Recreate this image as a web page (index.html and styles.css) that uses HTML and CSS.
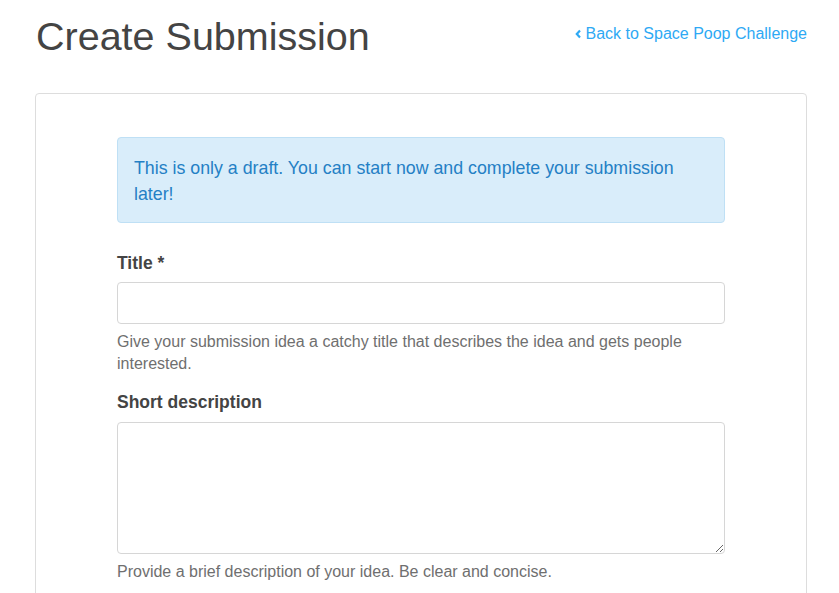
FILE: index.html
```html
<!DOCTYPE html>
<html lang="en">
<head>
    <meta charset="UTF-8">
    <meta name="viewport" content="width=device-width, initial-scale=1.0">
    <link rel="stylesheet" href="styles.css">
</head>
<body>
    <div class="page-head">
        <h1>Create Submission</h1>
        <a href="#" class="back-link">
            <svg width="6" height="10" viewBox="0 0 6 10"><polyline points="5,1.5 1.8,5 5,8.5" fill="none" stroke="currentColor" stroke-width="2.2"/></svg>
            Back to Space Poop Challenge
        </a>
    </div>

    <div class="panel">
        <div class="panel-body">
            <div class="alert">
                This is only a draft. You can start now and complete your submission later!
            </div>

            <form>
                <div class="form-group">
                    <label for="title">Title *</label>
                    <input type="text" id="title" name="title">
                    <p class="help">Give your submission idea a catchy title that describes the idea and gets people interested.</p>
                </div>
                <div class="form-group">
                    <label for="short">Short description</label>
                    <textarea id="short" name="short"></textarea>
                    <p class="help">Provide a brief description of your idea. Be clear and concise.</p>
                </div>
            </form>
        </div>
    </div>
</body>
</html>
```

FILE: styles.css
```css
body {
    margin: 0;
    font-family: "Liberation Sans", Arial, sans-serif;
    color: #444;
    background: #fff;
}

.page-head {
    display: flex;
    justify-content: space-between;
    align-items: flex-start;
    padding: 0 32px 0 36px;
}

h1 {
    margin: 14px 0 0 0;
    font-size: 39.5px;
    line-height: 44px;
    font-weight: normal;
    color: #444;
}

.back-link {
    display: flex;
    align-items: center;
    gap: 5px;
    margin-top: 24px;
    font-size: 16px;
    line-height: 20px;
    color: #2ea9f4;
    text-decoration: none;
}

.panel {
    margin: 35px 32px 0 35px;
    border: 1px solid #ddd;
    border-radius: 4px;
    padding-bottom: 30px;
}

.panel-body {
    width: 608px;
    margin: 0 auto;
    padding-top: 43px;
}

.alert {
    background: #d9edfa;
    border: 1px solid #bfe0f5;
    border-radius: 4px;
    padding: 17px 16px 15px 16px;
    font-size: 17.8px;
    line-height: 26px;
    color: #2480c5;
}

form {
    margin-top: 28px;
}

.form-group {
    margin-bottom: 15px;
}

label {
    display: block;
    font-size: 17.5px;
    line-height: 24px;
    font-weight: bold;
    margin-bottom: 7px;
}

.form-group + .form-group label {
    margin-bottom: 8px;
}

input[type="text"],
textarea {
    display: block;
    box-sizing: border-box;
    width: 100%;
    border: 1px solid #d6d6d6;
    border-radius: 4px;
    font-family: inherit;
    font-size: 16px;
    padding: 8px 12px;
}

input[type="text"] {
    height: 42px;
}

textarea {
    height: 132px;
    resize: vertical;
}

.help {
    margin: 7px 0 0 0;
    font-size: 16px;
    line-height: 22px;
    color: #6f6f6f;
}
```
